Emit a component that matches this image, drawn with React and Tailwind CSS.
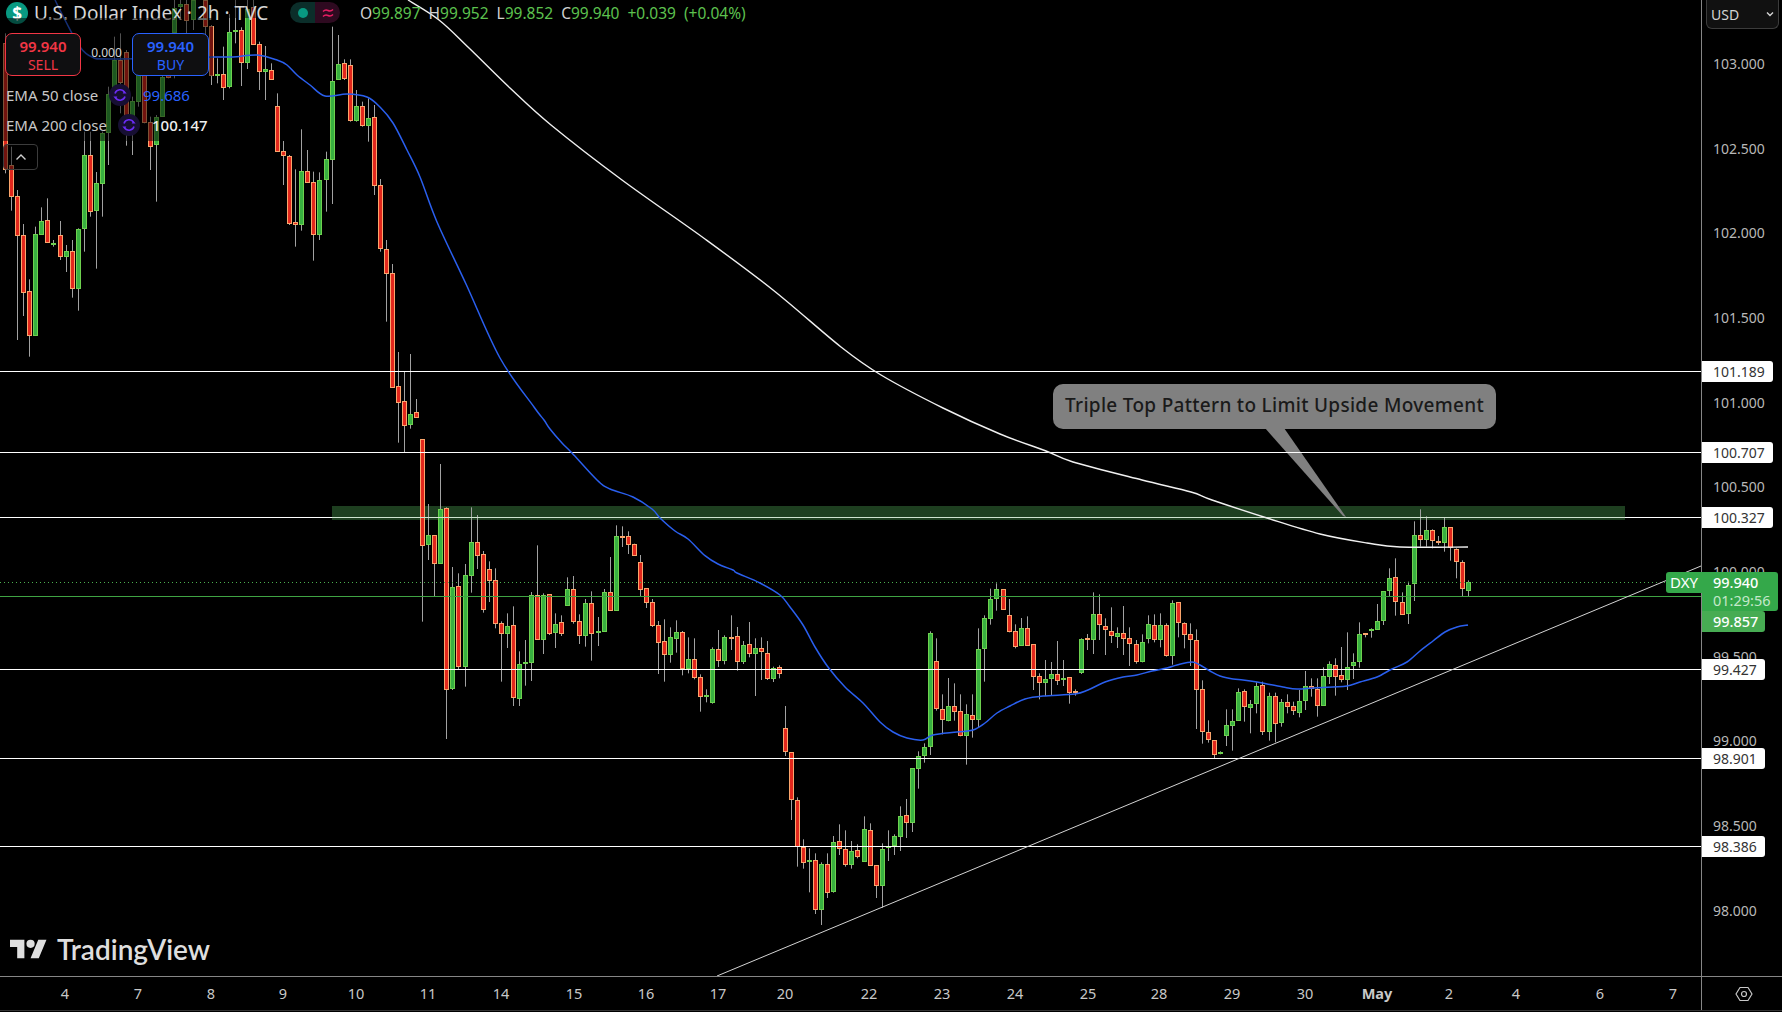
import React from "react";

const seg = (ox, oy, text) =>
  text.trim().split(/[;\n]+/).map((s) => s.trim()).filter(Boolean).map((s) => {
    const [x, wt, bt, bb, wb, c] = s.split(/\s+/);
    return {
      x: Math.floor(ox + x / 3) + 0.5,
      wt: oy + wt / 3,
      bt: oy + bt / 3,
      bb: oy + bb / 3,
      wb: oy + wb / 3,
      red: c === "R",
    };
  });

const candles = [
  ...seg(0, 0, `16 100 130 510 520 R;34 440 495 590 632 R;52 570 588 707 1020 R;70 672 705 878 948 R;88 838 873 1007 1070 R;
106 680 703 1007 1007 G;124 622 663 704 704 G;142 595 660 728 728 R;160 720 730 732 740 G;181 663 706 770 780 R;199 735 753 770 816 G;
217 720 753 866 893 R;235 685 688 866 932 G;253 395 465 686 755 G;271 395 465 635 650 R;289 516 550 632 806 G;307 395 400 551 650 G;
325 260 283 400 495 G;343 110 180 280 300 G;361 100 180 248 340 R;379 150 157 386 437 R;397 290 304 390 465 G;415 180 220 305 320 G;
433 215 225 370 370 R;451 350 367 440 510 R;469 345 350 436 605 G;487 200 230 350 350 G;505 120 180 233 235 R`),
  ...seg(150, 0, `73 0 25 100 235 G;91 0 12 22 60 G;109 0 12 62 100 R;130 0 0 60 90 G;166 0 0 82 110 R;184 75 78 228 255 R;202 175 222 228 250 G;
220 140 222 263 300 R;238 42 96 260 265 G;256 0 90 96 130 G;274 82 90 188 258 R;292 0 28 188 207 G;310 0 22 134 134 R;328 125 132 215 270 R;
346 138 208 215 300 G;364 190 211 239 239 R`),
  ...seg(0, 0, `832 280 319 455 455 R;850 423 454 467 555 R;868 465 469 671 675 R;886 508 667 674 740 R;904 388 514 674 692 G;922 450 514 548 548 R;
940 515 547 704 782 R;958 517 541 704 720 G;978 455 478 539 635 G;997 80 244 479 612 G;1015 105 192 240 240 G;1033 178 190 238 240 R;
1051 178 196 362 365 R;1069 270 319 362 365 G;1087 305 319 377 380 R;1105 295 355 377 425 G;1123 315 352 557 585 R;1141 537 556 746 755 R;
1159 720 748 821 965 R;1177 792 820 1163 1163 R`),
  ...seg(370, 320, `85 96 198 248 368 R;103 153 243 317 399 R;121 102 282 314 326 G;139 237 276 293 293 R`),
  ...seg(400, 420, `67 58 58 377 605 R;85 252 346 374 420 G;103 346 346 431 530 R;121 132 267 431 431 G;139 262 265 809 957 R;157 441 502 806 810 G;
175 460 499 740 748 R;196 432 466 740 800 G;214 262 367 467 518 G;232 285 367 407 447 R;250 393 403 570 578 R;268 424 448 482 546 R;
286 445 481 611 625 R;304 604 610 641 785 R;322 580 618 641 684 G;340 559 616 833 858 R;358 694 733 836 858 G;376 660 727 729 797 G;
394 516 526 728 783 G;412 376 526 659 659 R;430 520 526 659 702 G;448 522 523 641 645 R;466 580 613 638 684 G;484 586 607 641 648 R;
502 472 508 557 557 G;520 468 508 605 611 R;538 583 604 647 672 R;556 537 550 647 680 G;574 514 550 641 722 R;595 591 634 640 678 G;
613 507 517 635 635 G;631 411 517 572 572 R;649 316 349 572 572 G;667 319 349 351 381 R;685 334 349 374 402 R;703 371 373 407 407 R;
721 405 427 509 530 R;739 505 505 548 564 R;757 537 547 617 621 R;775 603 616 668 762 R;793 598 664 704 785 R;811 622 652 704 728 G;
829 601 637 656 698 G;847 633 637 748 766 R;865 652 718 748 760 G;883 655 718 773 778 R;901 763 772 830 875 R;919 808 826 828 847 G;
937 682 688 848 851 G;955 630 688 722 741 R;973 646 652 722 733 G;994 586 651 653 690 R;1012 621 649 725 752 R;1030 663 676 725 732 G;
1048 606 673 701 712 R;1066 655 685 701 828 G;1084 652 685 697 780 R;1102 663 700 776 780 R;1120 740 745 776 786 G;1138 736 742 761 775 R`),
  ...seg(760, 560, `76 438 505 575 588 R;94 577 577 719 780 R;112 712 721 860 920 R;130 838 860 908 926 R;148 865 901 907 997 G;166 880 901 1049 1062 R;
184 907 913 1049 1095 G;202 880 913 998 1014 R;220 828 847 995 998 G;238 793 844 868 885 R;256 811 868 914 920 R;274 843 874 914 926 G;
292 853 871 892 895 R;313 769 808 905 905 G;331 790 811 917 917 R;349 916 916 977 1014 R;367 850 868 977 1043 G;385 811 859 865 903 G;
403 823 829 859 885 G;421 739 769 830 873 G;439 717 766 788 834 R;457 625 625 788 816 G;475 574 589 626 686 G;493 550 562 587 608 G;
511 214 220 560 585 G;529 235 304 448 452 R;547 403 448 479 523 R;565 354 439 484 484 G;583 370 439 455 482 R;601 403 454 529 529 R;
619 433 463 529 614 G;637 403 466 479 533 R;655 205 268 479 502 G;673 166 175 266 365 G;691 86 118 176 194 G;709 70 88 116 152 G;
730 88 88 149 149 R;748 117 166 215 217 R;766 193 214 260 265 R;784 174 205 257 257 G;802 169 205 257 257 R;820 253 253 352 390 R;
838 340 349 368 418 R;856 300 358 368 408 G;874 306 343 356 405 G;892 243 343 362 375 R;910 300 354 358 378 G;928 352 352 398 431 R;
946 388 394 400 407 R;964 235 238 339 342 G;982 222 235 241 270 R;1000 97 163 241 282 G;1018 103 163 196 240 R;1036 175 199 211 285 R;
1054 142 214 229 249 R;1072 202 220 232 264 G;1090 138 220 238 285 R;1108 202 235 253 318 R;1129 240 253 307 311 R;1147 223 247 307 307 G;
1165 166 193 236 250 G;1183 163 196 241 247 R;1201 160 196 241 262 G;1219 190 196 289 290 R;1237 121 130 289 314 G;1255 127 127 190 232 R;
1273 187 190 226 265 R;1291 190 223 241 318 R;1309 208 241 391 507 R;1327 361 388 517 551 R;1345 481 517 541 548 R;1363 541 541 584 595 R;
1381 574 576 581 583 G;1399 448 496 527 558 G;1417 448 484 497 572 G`),
  ...seg(1200, 500, `115 565 577 662 662 G;133 568 574 622 665 R;151 600 613 623 700 G;169 547 558 613 640 G;187 545 556 695 705 R;208 578 589 695 722 G;
226 578 589 673 727 R;244 597 607 670 680 G;262 583 607 620 640 R;280 605 619 632 645 R;298 570 604 640 652 G;316 513 559 604 630 G;
334 535 559 566 590 R;352 535 568 619 650 R;370 502 529 617 617 G;388 484 493 530 552 G;406 475 496 530 587 R;424 441 526 541 547 R;
442 397 502 539 570 G;460 460 487 499 537 G;478 367 403 487 503 G;496 399 399 402 412 R;514 385 388 394 413 G;532 312 364 389 389 G;
550 274 274 362 375 G;568 205 235 274 290 G;586 175 232 307 347 R;607 277 307 344 344 R;625 245 256 341 372 G;643 64 106 253 303 G;
661 28 106 121 140 R;679 49 91 121 140 G;697 88 91 124 145 R;715 108 124 128 135 R;733 53 82 128 155 G;751 82 82 145 182 R;
769 145 148 187 235 R;787 181 187 268 288 R;805 241 247 272 288 G`),
];

const ema50 = [
  [55, 0], [65, 20], [80, 47], [92, 57], [110, 59], [213, 57], [233, 57], [257, 55], [277, 60], [287, 65], [297, 75], [310, 85], [325, 96],
  [347, 94], [367, 97], [380, 107], [393, 123], [407, 150], [420, 177], [437, 222], [466, 284], [500, 358], [534, 407], [544, 420], [550, 429],
  [562, 443], [572, 453], [597, 480], [610, 489], [633, 497], [652, 509], [660, 518], [675, 531], [688, 539], [705, 555.7], [718, 564], [733, 570],
  [737, 573], [760, 583], [780, 595], [790, 607], [803, 625], [815, 647], [828, 667], [845, 687], [863, 703], [880, 722], [893, 732], [907, 738],
  [923, 740], [933, 735], [957, 732], [973, 730], [985, 723], [997, 713], [1010, 706], [1025, 699], [1043, 696], [1075, 694], [1088, 690],
  [1105, 682], [1123, 677], [1137, 675], [1152, 671], [1167, 668], [1177, 665], [1192, 662], [1200, 665], [1210, 671], [1220, 676], [1233, 679],
  [1243, 680], [1257, 682], [1267, 684], [1283, 687], [1297, 689], [1313, 688], [1333, 687], [1347, 686], [1360, 682], [1377, 677], [1392, 669],
  [1407, 662], [1420, 651], [1433, 641], [1445, 632], [1457, 627], [1468, 625],
];
const ema200 = [
  [408, 0], [439, 20], [469, 48], [510, 88], [551, 125], [622, 180], [705, 239], [773, 290], [841, 347], [881, 375], [943, 408], [1000, 434],
  [1046, 451], [1073, 462], [1142, 480], [1191, 492], [1212, 500], [1267, 518], [1320, 534], [1367, 543], [1400, 547], [1468, 547],
];

// Catmull-Rom through the sampled points gives the curve of a moving average.
const smooth = (a) => {
  let d = `M${a[0][0]},${a[0][1]}`;
  for (let i = 0; i < a.length - 1; i++) {
    const p0 = a[i - 1] || a[i];
    const p1 = a[i];
    const p2 = a[i + 1];
    const p3 = a[i + 2] || p2;
    const c1x = p1[0] + (p2[0] - p0[0]) / 6;
    const c1y = p1[1] + (p2[1] - p0[1]) / 6;
    const c2x = p2[0] - (p3[0] - p1[0]) / 6;
    const c2y = p2[1] - (p3[1] - p1[1]) / 6;
    d += `C${c1x},${c1y} ${c2x},${c2y} ${p2[0]},${p2[1]}`;
  }
  return d;
};

const hLines = [371.5, 452.5, 517.5, 669.5, 758.5, 846.5];
const axisTicks = ["103.000", "102.500", "102.000", "101.500", "101.000", "100.500", "100.000", "99.500", "99.000", "98.500", "98.000"];
const tags = [
  { y: 371.5, t: "101.189", w: "w-[71px]" },
  { y: 452.5, t: "100.707", w: "w-[71px]" },
  { y: 517.5, t: "100.327", w: "w-[71px]" },
  { y: 669.5, t: "99.427", w: "w-[63px]" },
  { y: 758.5, t: "98.901", w: "w-[63px]" },
  { y: 846.5, t: "98.386", w: "w-[63px]" },
];
const times = [
  ["4", 65], ["7", 138], ["8", 211], ["9", 283], ["10", 356], ["11", 428], ["14", 501], ["15", 574], ["16", 646], ["17", 718], ["20", 785],
  ["22", 869], ["23", 942], ["24", 1015], ["25", 1088], ["28", 1159], ["29", 1232], ["30", 1305], ["May", 1377], ["2", 1449], ["4", 1516],
  ["6", 1600], ["7", 1673],
];

function Chart() {
  return (
    <svg className="absolute inset-0" width="1701" height="976" viewBox="0 0 1701 976">
      <rect x="332" y="506" width="1293" height="14" fill="#1e3f20" />
      {candles.map((c, i) => {
        const top = Math.round(c.bt);
        const h = Math.max(Math.round(c.bb) - top - 1, 1);
        return (
          <g key={i}>
            <line x1={c.x} x2={c.x} y1={c.wt} y2={c.wb} stroke="#a2a2a2" strokeWidth="1" />
            <rect
              x={c.x - 2}
              y={top + 0.5}
              width="4"
              height={h}
              fill={c.red ? "#e2271c" : "#38b040"}
              stroke={c.red ? "#fba56c" : "#6ed14f"}
              strokeWidth="1"
            />
          </g>
        );
      })}
      <polygon points="1265,428 1284,428 1346,517 1343,516" fill="#808080" />
      {hLines.map((y) => (
        <line key={y} x1="0" x2="1701" y1={y} y2={y} stroke="#ffffff" strokeWidth="1" />
      ))}
      <line x1="332" x2="1625" y1="517.5" y2="517.5" stroke="#cfe4cf" strokeWidth="1" />
      <line x1="0" x2="1665" y1="582.5" y2="582.5" stroke="#4caf50" strokeWidth="1" strokeDasharray="1 3" />
      <line x1="0" x2="1701" y1="596.5" y2="596.5" stroke="#3fa343" strokeWidth="1" />
      <line x1="717" y1="976" x2="1701" y2="566" stroke="#d4d4d4" strokeWidth="1" />
      <path d={smooth(ema200)} fill="none" stroke="#f0f0f0" strokeWidth="1.4" />
      <path d={smooth(ema50)} fill="none" stroke="#2a5fee" strokeWidth="1.5" />
    </svg>
  );
}

function SyncIcon() {
  return (
    <span className="flex h-[22px] w-[22px] items-center justify-center rounded-full bg-[#170f33]">
      <svg width="16" height="16" viewBox="0 0 16 16" fill="none" stroke="#6a2cf5" strokeWidth="1.6">
        <path d="M3 6.5A5.2 5.2 0 0 1 12.6 5.6" />
        <path d="M13 9.5A5.2 5.2 0 0 1 3.4 10.4" />
        <path d="M10.6 6.6h4l-2-2.6z" fill="#6a2cf5" stroke="none" />
        <path d="M5.4 9.4h-4l2 2.6z" fill="#6a2cf5" stroke="none" />
      </svg>
    </span>
  );
}

function Legend() {
  return (
    <div className="absolute left-0 top-0 flex flex-col">
      <div className="flex h-[18px] items-start">
        <div className="flex h-[18px] w-[278px] items-start bg-black/50 pl-[6px]">
          <span className="mt-[2px] flex h-[22px] w-[22px] shrink-0 items-center justify-center rounded-full bg-[#089981] text-[17px] font-bold leading-none text-white">
            $
          </span>
          <span className="ml-[6px] whitespace-nowrap text-[19px] leading-[27px] text-[#d6d6d6]">U.S. Dollar Index · 2h · TVC</span>
        </div>
        <div className="ml-[12px] mt-[2px] flex h-[21px] w-[50px] overflow-hidden rounded-full">
          <span className="flex w-[25px] items-center justify-center bg-[#0b2e2a]">
            <span className="h-[10px] w-[10px] rounded-full bg-[#089981]" />
          </span>
          <span className="flex w-[25px] items-center justify-center bg-[#2e0a20]">
            <svg width="12" height="10" viewBox="0 0 12 10" fill="none" stroke="#e91e63" strokeWidth="1.5">
              <path d="M1 3.5c2-2 3-2 5-1s3 1 5-1" />
              <path d="M1 8.5c2-2 3-2 5-1s3 1 5-1" />
            </svg>
          </span>
        </div>
        <div className="ml-[20px] flex gap-[8px] whitespace-nowrap text-[15.5px] leading-[26px] text-[#5dc24f]">
          <span><span className="text-[#d0d0d0]">O</span>99.897</span>
          <span><span className="text-[#d0d0d0]">H</span>99.952</span>
          <span><span className="text-[#d0d0d0]">L</span>99.852</span>
          <span><span className="text-[#d0d0d0]">C</span>99.940</span>
          <span>+0.039</span>
          <span>(+0.04%)</span>
        </div>
      </div>
      <div className="flex h-[58px] w-[213px] items-start bg-black/50 pl-[5px] pt-[15px]">
        <div className="flex h-[43px] w-[76px] flex-col items-center justify-center rounded-[7px] border border-[#f23645] bg-[#0f0f11] text-[#f23645]">
          <span className="text-[15px] font-semibold leading-[20px]">99.940</span>
          <span className="text-[14px] leading-[17px]">SELL</span>
        </div>
        <span className="w-[51px] pt-[11px] text-center text-[12px] leading-[18px] text-[#d4d4d4]">0.000</span>
        <div className="flex h-[43px] w-[77px] flex-col items-center justify-center rounded-[7px] border border-[#2962ff] bg-[#0f0f11] text-[#2962ff]">
          <span className="text-[15px] font-semibold leading-[20px]">99.940</span>
          <span className="text-[14px] leading-[17px]">BUY</span>
        </div>
      </div>
      <div className="flex h-[35px] w-[192px] items-center bg-black/50 pl-[6px] pt-[3px] text-[15px] text-[#c8c8c8]">
        <span className="w-[103px] whitespace-nowrap">EMA 50 close</span>
        <SyncIcon />
        <span className="ml-[12px] text-[#2962ff]">99.686</span>
      </div>
      <div className="flex h-[30px] w-[210px] items-center bg-black/50 pb-[2px] pl-[6px] text-[15px] text-[#c8c8c8]">
        <span className="w-[112px] whitespace-nowrap">EMA 200 close</span>
        <SyncIcon />
        <span className="ml-[12px] font-medium text-[#eeeeee]">100.147</span>
      </div>
      <div className="ml-[3px] mt-[3px] flex h-[26px] w-[35px] items-center justify-center rounded-[4px] border border-[#3c3c3c] bg-black/50">
        <svg width="12" height="8" viewBox="0 0 12 8" fill="none" stroke="#d0d0d0" strokeWidth="1.4">
          <path d="M1.5 6.5 6 2l4.500 4.500" />
        </svg>
      </div>
    </div>
  );
}

function Callout() {
  return (
    <div className="absolute left-[1053px] top-[384px] flex h-[45px] w-[443px] items-center justify-center rounded-[10px] bg-[#808080] pb-[2px] text-[19px] font-medium tracking-[0.3px] text-[#1a1a1a]">
      Triple Top Pattern to Limit Upside Movement
    </div>
  );
}

function Logo() {
  return (
    <div className="absolute left-[10px] top-[934px] flex items-center gap-[10px] text-[#dedede]">
      <svg width="37" height="20" viewBox="0 4 36 18" fill="currentColor">
        <path d="M14 22H7V11H0V4h14v18zM28 22h-8l7.500-18h8L28 22z" />
        <circle cx="20" cy="8" r="4" />
      </svg>
      <span className="font-['Lato',sans-serif] text-[28px] font-semibold leading-[30px]">TradingView</span>
    </div>
  );
}

function PriceAxis() {
  return (
    <div className="relative flex-1 border-l border-[#868686]">
      <div className="flex flex-col pl-[11px] pt-[21px] text-[14px] text-[#b8b8b8]">
        {axisTicks.map((t) => (
          <div key={t} className="flex h-[84.7px] items-center">{t}</div>
        ))}
      </div>
      <div className="absolute left-[4px] top-0 flex h-[29px] w-[73px] items-center justify-between rounded-b-[6px] border border-t-0 border-[#3c3c3c] bg-[#111111] px-[4px] text-[14px] text-[#d4d4d4]">
        <span>USD</span>
        <svg width="8" height="6" viewBox="0 0 8 6" fill="none" stroke="#d4d4d4" strokeWidth="1.400">
          <path d="M1 1.500 4 4.500 7 1.500" />
        </svg>
      </div>
      {tags.map((g) => (
        <div
          key={g.t}
          className={`absolute left-0 flex h-[21px] ${g.w} items-center rounded-r-[3px] bg-white pl-[11px] text-[14px] text-[#333333]`}
          style={{ top: g.y - 10.5 }}
        >
          {g.t}
        </div>
      ))}
      <div className="absolute right-full top-[572px] flex h-[21px] w-[36px] items-center justify-center rounded-l-[3px] bg-[#34a84a] text-[15px] text-white">DXY</div>
      <div className="absolute left-0 top-[572px] flex h-[39px] w-[76px] flex-col rounded-r-[3px] bg-[#34a84a] pl-[11px] pt-[1px] text-[14.500px] leading-[18px]">
        <span className="font-medium text-white">99.940</span>
        <span className="text-[#c4e8ca]">01:29:56</span>
      </div>
      <div className="absolute left-0 top-[611px] flex h-[21px] w-[63px] items-center rounded-r-[3px] bg-[#47ac53] pl-[11px] text-[14.500px] font-medium text-white">99.857</div>
    </div>
  );
}

function TimeAxis() {
  return (
    <div className="flex h-[34px] border-b border-[#333333]">
      <div className="flex w-[1701px] items-center text-[14.500px] text-[#c8c8c8]">
        <div className="w-[65px] shrink-0" />
        {times.map(([t, x], i) => (
          <div key={i} className="shrink-0" style={{ width: i + 1 < times.length ? times[i + 1][1] - x : 28 }}>
            <span className={t === "May" ? "inline-block -translate-x-1/2 font-bold" : "inline-block -translate-x-1/2"}>{t}</span>
          </div>
        ))}
      </div>
      <div className="flex flex-1 items-center justify-center border-l border-[#868686] pl-[4px]">
        <svg width="18" height="18" viewBox="0 0 18 18" fill="none" stroke="#c8c8c8" strokeWidth="1.200">
          <path d="M5 2.500h8L17 9l-4 6.500H5L1 9z" strokeLinejoin="round" />
          <circle cx="9" cy="9" r="2.500" />
        </svg>
      </div>
    </div>
  );
}

export default function App() {
  return (
    <div className="flex h-[1012px] w-[1782px] flex-col overflow-hidden bg-black font-['Noto_Sans',sans-serif]">
      <div className="flex h-[977px] border-b border-[#868686]">
        <div className="relative w-[1701px] overflow-visible">
          <Chart />
          <Legend />
          <Callout />
          <Logo />
        </div>
        <PriceAxis />
      </div>
      <TimeAxis />
    </div>
  );
}
